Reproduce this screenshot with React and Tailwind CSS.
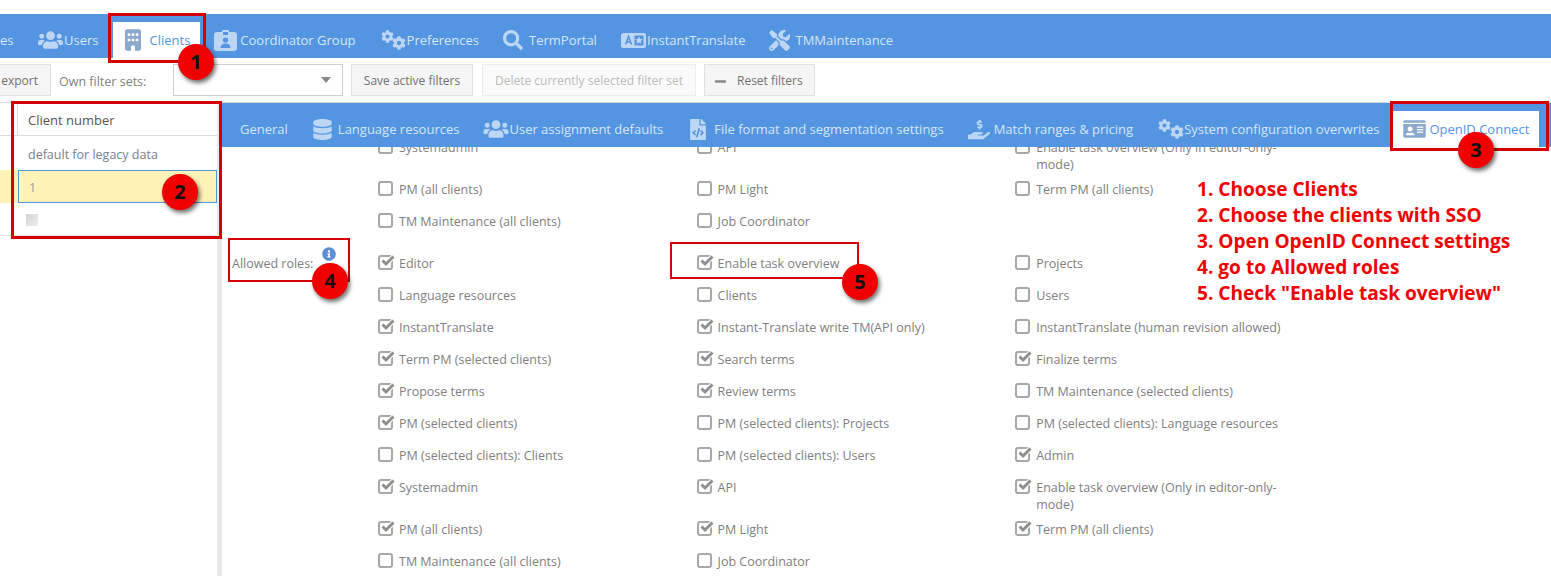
import {
  FaUsers,
  FaSearch,
  FaTools,
  FaDatabase,
  FaFileCode,
  FaHandHoldingUsd,
  FaIdCard,
  FaInfoCircle,
  FaMinus,
  FaCog,
} from "react-icons/fa";
import { FaBuilding } from "react-icons/fa6";

// two gears, small one top left and larger one bottom right
const GearsIcon = ({ className }) => (
  <span className={`relative block shrink-0 ${className}`}>
    <FaCog className="absolute left-0 top-0 w-[13px] h-[13px]" />
    <FaCog className="absolute right-0 bottom-0 w-[14px] h-[14px]" />
  </span>
);

const BadgeIcon = ({ className }) => (
  <svg viewBox="0 0 23 22" className={className} fill="currentColor">
    <path d="M3 3h5V2a1 1 0 0 1 1-1h5a1 1 0 0 1 1 1v1h5a3 3 0 0 1 3 3v13a3 3 0 0 1-3 3H3a3 3 0 0 1-3-3V6a3 3 0 0 1 3-3z" />
    <path fill="#5495e1" d="M9 3h5v3H9z" />
    <circle cx="11.5" cy="11" r="2.6" fill="#5495e1" />
    <path fill="#5495e1" d="M6.5 19c0-3 2-4.5 5-4.5s5 1.5 5 4.5z" />
  </svg>
);

const TranslateIcon = ({ className }) => (
  <svg viewBox="0 0 25 15" className={className} fill="currentColor">
    <rect width="25" height="15" rx="2.5" />
    <path fill="none" stroke="#5495e1" strokeWidth="1.6" d="M4.5 11.5 7.5 3.5l3 8M5.5 9h4" />
    <rect x="13.5" y="2.5" width="9" height="10" fill="#5495e1" />
    <path d="M18 3.5l1.2 2.6 2.6.2-2 1.8.6 2.7-2.4-1.4-2.4 1.4.6-2.7-2-1.8 2.6-.2z" />
  </svg>
);

const navItems = [
  { label: "Users", icon: FaUsers, iconClass: "w-[25px] h-5", gap: "gap-px", ml: "ml-px" },
  {
    label: "Clients",
    icon: FaBuilding,
    iconClass: "w-[16px] h-[22px]",
    gap: "gap-2",
    active: true,
    tabClass: "ml-[-9px] mr-[-10px] pl-3 pr-2.5",
  },
  { label: "Coordinator Group", icon: BadgeIcon, iconClass: "w-[23px] h-[22px]", gap: "gap-[3px]" },
  { label: "Preferences", icon: GearsIcon, iconClass: "w-[25px] h-5", gap: "gap-px", ml: "ml-px" },
  { label: "TermPortal", icon: FaSearch, iconClass: "w-5 h-5", gap: "gap-1.5" },
  { label: "InstantTranslate", icon: TranslateIcon, iconClass: "w-[25px] h-[15px]", gap: "gap-px" },
  { label: "TMMaintenance", icon: FaTools, iconClass: "w-[21px] h-[21px]", gap: "gap-[5px]" },
];

const tabItems = [
  { label: "General" },
  { label: "Language resources", icon: FaDatabase, iconClass: "w-[19px] h-[21px]", gap: "gap-1.5", ml: "ml-px" },
  { label: "User assignment defaults", icon: FaUsers, iconClass: "w-[26px] h-5", gap: "gap-0" },
  { label: "File format and segmentation settings", icon: FaFileCode, iconClass: "w-4 h-[21px]", gap: "gap-2", ml: "ml-[3px]" },
  { label: "Match ranges & pricing", icon: FaHandHoldingUsd, iconClass: "w-[22px] h-[21px]", gap: "gap-1" },
  { label: "System configuration overwrites", icon: GearsIcon, iconClass: "w-[26px] h-5", gap: "gap-0", ml: "ml-px" },
  {
    label: "OpenID Connect",
    icon: FaIdCard,
    iconClass: "w-[23px] h-5",
    gap: "gap-[3px]",
    active: true,
    tabClass: "-mx-2.5 px-2.5",
  },
];

const topGroup = [
  ["Systemadmin", false],
  ["API", false],
  ["Enable task overview (Only in editor-only-mode)", false],
  ["PM (all clients)", false],
  ["PM Light", false],
  ["Term PM (all clients)", false],
  ["TM Maintenance (all clients)", false],
  ["Job Coordinator", false],
];

const roleGroup = [
  ["Editor", true],
  ["Enable task overview", true],
  ["Projects", false],
  ["Language resources", false],
  ["Clients", false],
  ["Users", false],
  ["InstantTranslate", true],
  ["Instant-Translate write TM(API only)", true],
  ["InstantTranslate (human revision allowed)", false],
  ["Term PM (selected clients)", true],
  ["Search terms", true],
  ["Finalize terms", true],
  ["Propose terms", true],
  ["Review terms", true],
  ["TM Maintenance (selected clients)", false],
  ["PM (selected clients)", true],
  ["PM (selected clients): Projects", false],
  ["PM (selected clients): Language resources", false],
  ["PM (selected clients): Clients", false],
  ["PM (selected clients): Users", false],
  ["Admin", true],
  ["Systemadmin", true],
  ["API", true],
  ["Enable task overview (Only in editor-only-mode)", true],
  ["PM (all clients)", true],
  ["PM Light", true],
  ["Term PM (all clients)", true],
  ["TM Maintenance (all clients)", false],
  ["Job Coordinator", false],
];

const steps = [
  "1. Choose Clients",
  "2. Choose the clients with SSO",
  "3. Open OpenID Connect settings",
  "4. go to Allowed roles",
  '5. Check "Enable task overview"',
];

const TabItem = ({ item }) => {
  const Icon = item.icon;
  if (item.active) {
    return (
      <div className={`self-stretch flex items-center bg-white text-[#5495e1] ${item.tabClass}`}>
        <div className={`flex items-center ${item.gap}`}>
          <Icon className={`${item.iconClass} text-[#8aa9cd]`} />
          <span className="mt-0.5">{item.label}</span>
        </div>
      </div>
    );
  }
  return (
    <div className={`flex items-center shrink-0 ${item.gap || ""} ${item.ml || ""}`}>
      {Icon && <Icon className={`${item.iconClass} text-[#bcd6f4]`} />}
      <span className="mt-0.5">{item.label}</span>
    </div>
  );
};

const Checkbox = ({ label, checked }) => (
  <div className="flex items-start min-h-8 pt-2 w-[318.6px] text-[12.5px] leading-[17px] text-[#808080]">
    <span className="relative shrink-0 w-[15px] h-[15px] border-2 border-[#a8a8a8] rounded-[3px] bg-white">
      {checked && (
        <svg viewBox="0 0 16 13" className="absolute -top-[3px] left-0 w-4 h-[13px]" fill="none">
          <path d="M2.5 6.5 6 10l7.5-7.5" stroke="#ffffff" strokeWidth="5" />
          <path d="M2.5 6.5 6 10l7.5-7.5" stroke="#8f8f8f" strokeWidth="3" />
        </svg>
      )}
    </span>
    <span className="ml-1.5 w-[248px]">{label}</span>
  </div>
);

const ToolButton = ({ children, disabled, className = "" }) => (
  <div
    className={`h-8 flex items-center shrink-0 border text-xs pt-0.5 ${
      disabled ? "bg-[#fafafa] border-[#eeeeee] text-[#bbbbbb]" : "bg-[#f5f5f5] border-[#e0e0e0] text-[#707070]"
    } ${className}`}
  >
    {children}
  </div>
);

const Marker = ({ n, className }) => (
  <div
    className={`absolute w-9 h-9 rounded-full bg-[#f00000] flex items-center justify-center text-[20px] font-bold text-[#111] shadow-[2px_3px_4px_rgba(0,0,0,0.55)] ${className}`}
  >
    {n}
  </div>
);

const App = () => {
  return (
    <div className="relative w-[1551px] h-[576px] overflow-hidden bg-white font-['Open_Sans',sans-serif] text-[13px]">
      <div className="h-3.5" />

      {/* Main nav */}
      <div className="h-11 pt-2 bg-[#5495e1] flex items-center gap-6 text-[#d5e5f8] overflow-hidden">
        <span className="w-[13px] shrink-0 text-right mt-0.5">es</span>
        {navItems.map((item) => (
          <TabItem key={item.label} item={item} />
        ))}
      </div>

      {/* Filter toolbar */}
      <div className="h-[45px] flex items-start pt-1.5 border-b border-[#d8d8d8] text-[#666]">
        <ToolButton className="w-[52px] -ml-px justify-end pr-3 border-l-0">export</ToolButton>
        <span className="ml-2 w-[114px] h-8 leading-9 text-[12.5px] text-[#808080]">Own filter sets:</span>
        <div className="w-[170px] h-8 border border-[#cfcfcf] flex items-center justify-end pr-[11px]">
          <span className="w-0 h-0 border-x-[5px] border-x-transparent border-t-[6px] border-t-[#888]" />
        </div>
        <ToolButton className="ml-2 w-[122px] justify-center">Save active filters</ToolButton>
        <ToolButton disabled className="ml-[9px] w-[214px] justify-center">
          Delete currently selected filter set
        </ToolButton>
        <ToolButton className="ml-2 w-[111px] pl-[9px] gap-2.5">
          <FaMinus className="w-[13px] h-[13px] text-[#888]" />
          Reset filters
        </ToolButton>
      </div>

      <div className="flex h-[473px]">
        {/* Client list */}
        <div className="w-[217px] shrink-0 text-[#777]">
          <div className="h-[33px] flex border-b border-[#dcdcdc]">
            <div className="w-[18px] border-r border-[#dcdcdc]" />
            <div className="pl-2.5 leading-[34px] text-[#555]">Client number</div>
          </div>
          <div className="h-[34px] pl-7 leading-[38px] text-[12.5px] text-[#77808f]">default for legacy data</div>
          <div className="h-[33px] bg-[#fdf3b8] pl-[18px]">
            <div className="h-full pl-2.5 leading-[33px] text-[12.5px] border border-[#5495e1] text-[#999]">1</div>
          </div>
          <div className="h-[33px] pl-[26px] pt-[11px] border-b border-[#e6e6e6]">
            <div className="w-3 h-3 bg-linear-to-br from-[#d4d4d4] to-[#eeeeee]" />
          </div>
        </div>
        <div className="w-[5px] shrink-0 bg-[#e9e9e9]" />

        {/* Client settings */}
        <div className="flex-1 min-w-0">
          <div className="h-11 pt-2 bg-[#5495e1] flex items-center gap-6 pl-[18px] text-[#d5e5f8]">
            {tabItems.map((item) => (
              <TabItem key={item.label} item={item} />
            ))}
          </div>
          <div className="h-[429px] overflow-hidden">
            <div className="-mt-4 pl-[156px]">
              <div className="flex flex-wrap">
                {topGroup.map(([label, checked], i) => (
                  <Checkbox key={i} label={label} checked={checked} />
                ))}
              </div>
              <div className="relative mt-2.5 flex flex-wrap">
                <div className="absolute -left-[146px] top-2 text-[12.5px] text-[#808080] leading-[17px]">
                  Allowed roles:
                </div>
                <FaInfoCircle className="absolute -left-[56px] top-0 w-[14px] h-[14px] text-[#5a8fd8]" />
                {roleGroup.map(([label, checked], i) => (
                  <Checkbox key={i} label={label} checked={checked} />
                ))}
              </div>
            </div>
          </div>
        </div>
      </div>

      {/* Red annotations over the screenshot */}
      <div className="absolute left-[108px] top-[13px] w-[98px] h-[50px] border-[3px] border-[#d40000]" />
      <div className="absolute left-[11px] top-[101px] w-[211px] h-[138px] border-[3px] border-[#d40000]" />
      <div className="absolute left-[1390px] top-[101px] w-[159px] h-[50px] border-[3px] border-[#d40000]" />
      <div className="absolute left-[228px] top-[238px] w-[122px] h-[44px] border-2 border-[#d40000]" />
      <div className="absolute left-[670px] top-[242px] w-[189px] h-[37px] border-2 border-[#d40000]" />
      <Marker n="1" className="left-[178px] top-[44px]" />
      <Marker n="2" className="left-[162px] top-[174px]" />
      <Marker n="3" className="left-[1458px] top-[132px]" />
      <Marker n="4" className="left-[312px] top-[263px]" />
      <Marker n="5" className="left-[842px] top-[264px]" />
      <div className="absolute left-[1197px] top-[176px] text-[#f00000] font-bold text-[19.1px] leading-[26px]">
        {steps.map((step) => (
          <div key={step}>{step}</div>
        ))}
      </div>
    </div>
  );
};

export default App;
